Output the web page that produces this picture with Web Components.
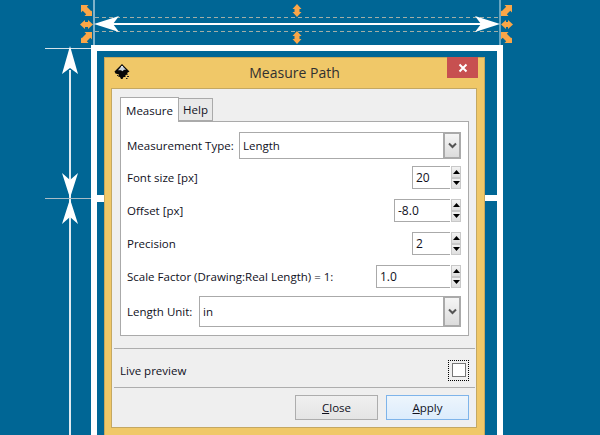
<!DOCTYPE html>
<html><head><meta charset="utf-8">
<style>
html,body{margin:0;padding:0;background:#006695}
body{font:11.5px "Open Sans",sans-serif;color:#10101c}
</style></head>
<body>
<m-canvas>
  <m-annotations slot="over"></m-annotations>
  <m-dialog title="Measure Path">
    <m-tabs>
      <m-row style="height:27px;margin-top:10px"><m-label>Measurement Type:</m-label><m-select value="Length" style="width:222px;height:27px"></m-select></m-row>
      <m-row style="height:23px;margin-top:7px"><m-label>Font size [px]</m-label><m-spin value="20" w="38"></m-spin></m-row>
      <m-row style="height:23px;margin-top:10px"><m-label>Offset [px]</m-label><m-spin value="-8.0" w="56"></m-spin></m-row>
      <m-row style="height:23px;margin-top:10px"><m-label>Precision</m-label><m-spin value="2" w="38"></m-spin></m-row>
      <m-row style="height:23px;margin-top:10px"><m-label>Scale Factor (Drawing:Real Length) = 1:</m-label><m-spin value="1.0" w="74"></m-spin></m-row>
      <m-row style="height:31px;margin-top:8px"><m-label>Length Unit:</m-label><m-select value="in" style="width:262px;height:31px"></m-select></m-row>
    </m-tabs>
    <m-live slot="live">Live preview</m-live>
    <m-button slot="actions" key="C" rest="lose"></m-button>
    <m-button slot="actions" key="A" rest="pply" primary></m-button>
  </m-dialog>
</m-canvas>
<script>
function def(name,html,init){
  customElements.define(name,class extends HTMLElement{
    constructor(){super();this.attachShadow({mode:'open'}).innerHTML=html;}
    connectedCallback(){if(init)init.call(this,this.shadowRoot);}
  });
}
def('m-canvas',`<style>
:host{display:block;width:600px;height:435px;position:relative;overflow:hidden;background:#006695}
.frame{box-sizing:border-box;width:412px;height:390px;margin:45px 0 0 91px;border:6px solid #fff;border-bottom:0;padding:6px 0 0 7px;float:left}
</style><div class="frame"><slot></slot></div><slot name="over"></slot>`);

const diag='<path d="M0 0H7.500L5.800 1.700 10.300 6.200 11 5.500V11H3.500L5.200 9.300 1.700 5.800 0 7.500Z"/>';
def('m-annotations',`<style>
:host{position:absolute;left:0;top:0;width:600px;height:435px;display:block;pointer-events:none}
svg{display:block}
</style>
<svg width="600" height="435" viewBox="0 0 600 435">
  <rect x="97" y="195" width="7" height="7" fill="#fff"/>
  <rect x="485" y="195" width="12" height="6" fill="#fff"/>
  <rect x="93" y="0" width="2" height="45" fill="#7fb2ca"/>
  <rect x="499.500" y="0" width="1" height="45" fill="#cfe3ec"/>
  <g stroke="#a3aea6" stroke-width="1" stroke-dasharray="4 3">
    <line x1="95" y1="17.500" x2="499" y2="17.500"/><line x1="95" y1="31.500" x2="499" y2="31.500"/>
  </g>
  <rect x="112" y="23" width="372" height="2" fill="#fff"/>
  <path d="M94 24 L119 16 L113 24 L119 32Z M500 24 L475 16 L481 24 L475 32Z" fill="#fff"/>
  <rect x="69" y="70" width="2" height="365" fill="#dfeaf0"/>
  <rect x="45" y="48" width="46" height="1" fill="#d5e2e9"/>
  <rect x="45" y="198" width="46" height="1" fill="#a9bcc6"/>
  <path d="M70 46 L78 74 L70 68 L62 74Z M70 198 L62 173 L70 180 L78 173Z M70 199 L62 224 L70 217 L78 224Z" fill="#fff"/>
  <g fill="#fba647">
    <g transform="translate(81 5)">${diag}</g>
    <g transform="translate(92 32) scale(-1 1)">${diag}</g>
    <g transform="translate(512 5) scale(-1 1)">${diag}</g>
    <g transform="translate(501 32)">${diag}</g>
    <path d="M80 24.500L85 20V22H88V20L93 24.500 88 29V27H85V29Z"/>
    <path d="M501 24.500L506 20V22H508V20L513 24.500 508 29V27H506V29Z"/>
    <path d="M297 4L301.500 9H299.500V12H301.500L297 17 292.500 12H294.500V9H292.500Z"/>
    <path d="M297 31L301.500 36H299.500V39H301.500L297 44 292.500 39H294.500V36H292.500Z"/>
  </g>
</svg>`);

def('m-dialog',`<style>
:host{display:block;box-sizing:border-box;width:381px;height:378px;background:#f0c868;border:1px solid #c9a85c;border-bottom:0}
.title{height:30px;display:flex;position:relative;align-items:center;justify-content:center;font:14px "Open Sans",sans-serif;color:#303030;padding-bottom:1px;box-sizing:border-box}
.logo{position:absolute;left:9px;top:6px}
.x{position:absolute;right:6px;top:-1px;width:31px;height:21px;background:#c75050;display:flex;align-items:center;justify-content:center}
.body{box-sizing:border-box;margin:0 6px;width:366px;height:340px;background:#efefef;border:1px solid #c4a862;padding:9px 7px 0 8px}
.live{height:39px;margin-top:12px;border-top:1px solid #adadad;margin-left:-6px;margin-right:-6px;box-sizing:border-box}
.acts{border-top:1px solid #adadad;margin:0 -6px;padding:7px 6px 0 0;display:flex;justify-content:flex-end;gap:8px}
</style>
<div class="title">
  <svg class="logo" width="16" height="16" viewBox="0 0 16 16">
    <path d="M8 0L15.500 7.500 13 9 14 10.500 11.500 11 11.500 13 9.500 13 8.500 15 7 15 6 13 4 12.500 5 10.500 1.500 9.500 .5 7.500Z" fill="#080808"/>
    <path d="M8 1.800L12 5.800 10 5.800 8.500 7.300 7 6.300 4 6.300Z" fill="#c9d2da"/>
    <path d="M8 1.800L9.500 3.300 6.500 3.300Z" fill="#fff"/>
    <path d="M13 12h2v1h-2zM12 14h1.500v1H12zM3 11h1v1H3z" fill="#222"/>
  </svg>
  <span id="t"></span>
  <div class="x"><svg width="10" height="10" viewBox="0 0 10 10"><path d="M1.500 1.500l7 7M8.500 1.500l-7 7" stroke="#fff" stroke-width="2"/></svg></div>
</div>
<div class="body">
  <slot></slot>
  <div class="live"><slot name="live"></slot></div>
  <div class="acts"><slot name="actions"></slot></div>
</div>`,function(r){r.getElementById('t').textContent=this.getAttribute('title');this.removeAttribute('title');});

def('m-tabs',`<style>
:host{display:block;width:349px}
.bar{display:flex;align-items:flex-end;height:24px;position:relative;z-index:1;margin-bottom:-1px}
.tab{box-sizing:border-box;border:1px solid #aaa;display:flex;align-items:center;justify-content:center}
.on{width:59px;height:25px;background:#fff;border-bottom:0}
.off{width:34px;height:23px;background:#e9e9e9;border-left:0;margin-bottom:1px;}
.panel{box-sizing:border-box;height:215px;background:#fff;border:1px solid #aaa;padding:0 7px 0 6px}
</style>
<div class="bar"><div class="tab on">Measure</div><div class="tab off">Help</div></div>
<div class="panel"><slot></slot></div>`);

def('m-row',`<style>:host{display:flex;align-items:center;justify-content:space-between}</style><slot></slot>`);
def('m-label',`<style>:host{display:block;white-space:nowrap}</style><slot></slot>`);

def('m-select',`<style>
:host{display:flex;box-sizing:border-box;border:1px solid #aaa;background:#fff;flex:none}
.v{flex:1;padding-left:3px;display:flex;align-items:center}
.b{box-sizing:border-box;width:18px;border:2px solid #aaa;margin:-1px;background:linear-gradient(#f5f5f5,#dcdcdc);display:flex;align-items:center;justify-content:center}
</style><div class="v" id="v"></div><div class="b"><svg width="9" height="7" viewBox="0 0 9 7"><path d="M1 1.500l3.500 3.500 3.500-3.500" fill="none" stroke="#555" stroke-width="2"/></svg></div>`,
function(r){r.getElementById('v').textContent=this.getAttribute('value');});

def('m-spin',`<style>
:host{display:flex;flex:none;align-items:center;gap:1px}
.i{box-sizing:border-box;height:23px;border:1px solid #aaa;border-right:0;background:#fff;padding-left:3px;display:flex;align-items:center;font-size:12px}
.s{width:10px;height:23px;display:flex;flex-direction:column;gap:0}
.s div{box-sizing:border-box;flex:1;background:linear-gradient(#f2f2f2,#dedede);border:1px solid #c8c8c8;display:flex;align-items:center;justify-content:center}
</style><div class="i" id="v"></div><div class="s">
<div><svg width="7" height="4"><path d="M3.500 0L7 4H0Z" fill="#000"/></svg></div>
<div><svg width="7" height="4"><path d="M0 0H7L3.500 4Z" fill="#000"/></svg></div></div>`,
function(r){const v=r.getElementById('v');v.textContent=this.getAttribute('value');v.style.width=this.getAttribute('w')+'px';});

def('m-live',`<style>
:host{display:flex;height:38px;box-sizing:border-box;align-items:center;justify-content:space-between;padding:4px 6px 0 6px}
.d{box-sizing:border-box;width:21px;height:21px;border:1px dotted #000;display:flex;align-items:center;justify-content:center}
.c{box-sizing:border-box;width:14px;height:14px;border:1px solid #777;background:#fff}
</style><slot></slot><div class="d"><div class="c"></div></div>`);

def('m-button',`<style>
:host{box-sizing:border-box;display:flex;width:83px;height:25px;align-items:center;justify-content:center;border:1px solid #adadad;background:linear-gradient(#f0f0f0,#e4e4e4)}
:host([primary]){border-color:#7eb4ea;background:linear-gradient(#edf5fc,#dcecfc)}
u{text-decoration:underline}
</style><span><u id="k"></u><span id="r"></span></span>`,
function(r){r.getElementById('k').textContent=this.getAttribute('key');r.getElementById('r').textContent=this.getAttribute('rest');});
</script>
</body></html>
